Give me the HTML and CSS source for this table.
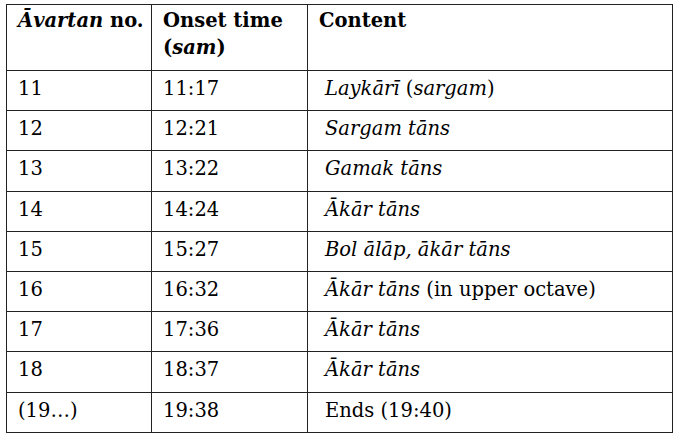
FILE: index.html
```html
<!DOCTYPE html>
<html>
<head>
<meta charset="utf-8">
<link rel="stylesheet" href="styles.css">
</head>
<body>
<table class="tbl">
  <colgroup>
    <col class="c1"><col class="c2"><col class="c3">
  </colgroup>
  <thead>
    <tr class="head">
      <th><i>Āvartan</i> no.</th>
      <th>Onset time<br>(<i>sam</i>)</th>
      <th>Content</th>
    </tr>
  </thead>
  <tbody>
    <tr><td>11</td><td>11:17</td><td class="ct"><i>Laykārī</i> (<i>sargam</i>)</td></tr>
    <tr><td>12</td><td>12:21</td><td class="ct"><i>Sargam tāns</i></td></tr>
    <tr><td>13</td><td>13:22</td><td class="ct"><i>Gamak tāns</i></td></tr>
    <tr><td>14</td><td>14:24</td><td class="ct"><i>Ākār tāns</i></td></tr>
    <tr><td>15</td><td>15:27</td><td class="ct"><i>Bol ālāp, ākār tāns</i></td></tr>
    <tr><td>16</td><td>16:32</td><td class="ct"><i>Ākār tāns</i> (in upper octave)</td></tr>
    <tr><td>17</td><td>17:36</td><td class="ct"><i>Ākār tāns</i></td></tr>
    <tr><td>18</td><td>18:37</td><td class="ct"><i>Ākār tāns</i></td></tr>
    <tr><td>(19…)</td><td>19:38</td><td class="ct">Ends (19:40)</td></tr>
  </tbody>
</table>
</body>
</html>
```
FILE: styles.css
```css
html, body {
  margin: 0;
  background: #fff;
}
body {
  padding: 4px 0 0 6px;
  font-family: "DejaVu Serif", serif;
  font-size: 19.5px;
  color: #000;
}
.tbl {
  border-collapse: collapse;
  width: 666px;
  table-layout: fixed;
}
.c1 { width: 145px; }
.c2 { width: 156px; }
.c3 { width: 365px; }
.tbl th, .tbl td {
  border: 1px solid #222;
  text-align: left;
  vertical-align: top;
  padding: 0 0 0 11px;
  line-height: 25px;
}
.tbl th {
  font-weight: bold;
  height: 66px;
  padding-top: 2px;
  line-height: 27px;
  box-sizing: border-box;
}
.tbl td {
  height: 40.2px;
  padding-top: 5px;
  box-sizing: border-box;
}
.tbl td.ct {
  padding-left: 17px;
}
```
